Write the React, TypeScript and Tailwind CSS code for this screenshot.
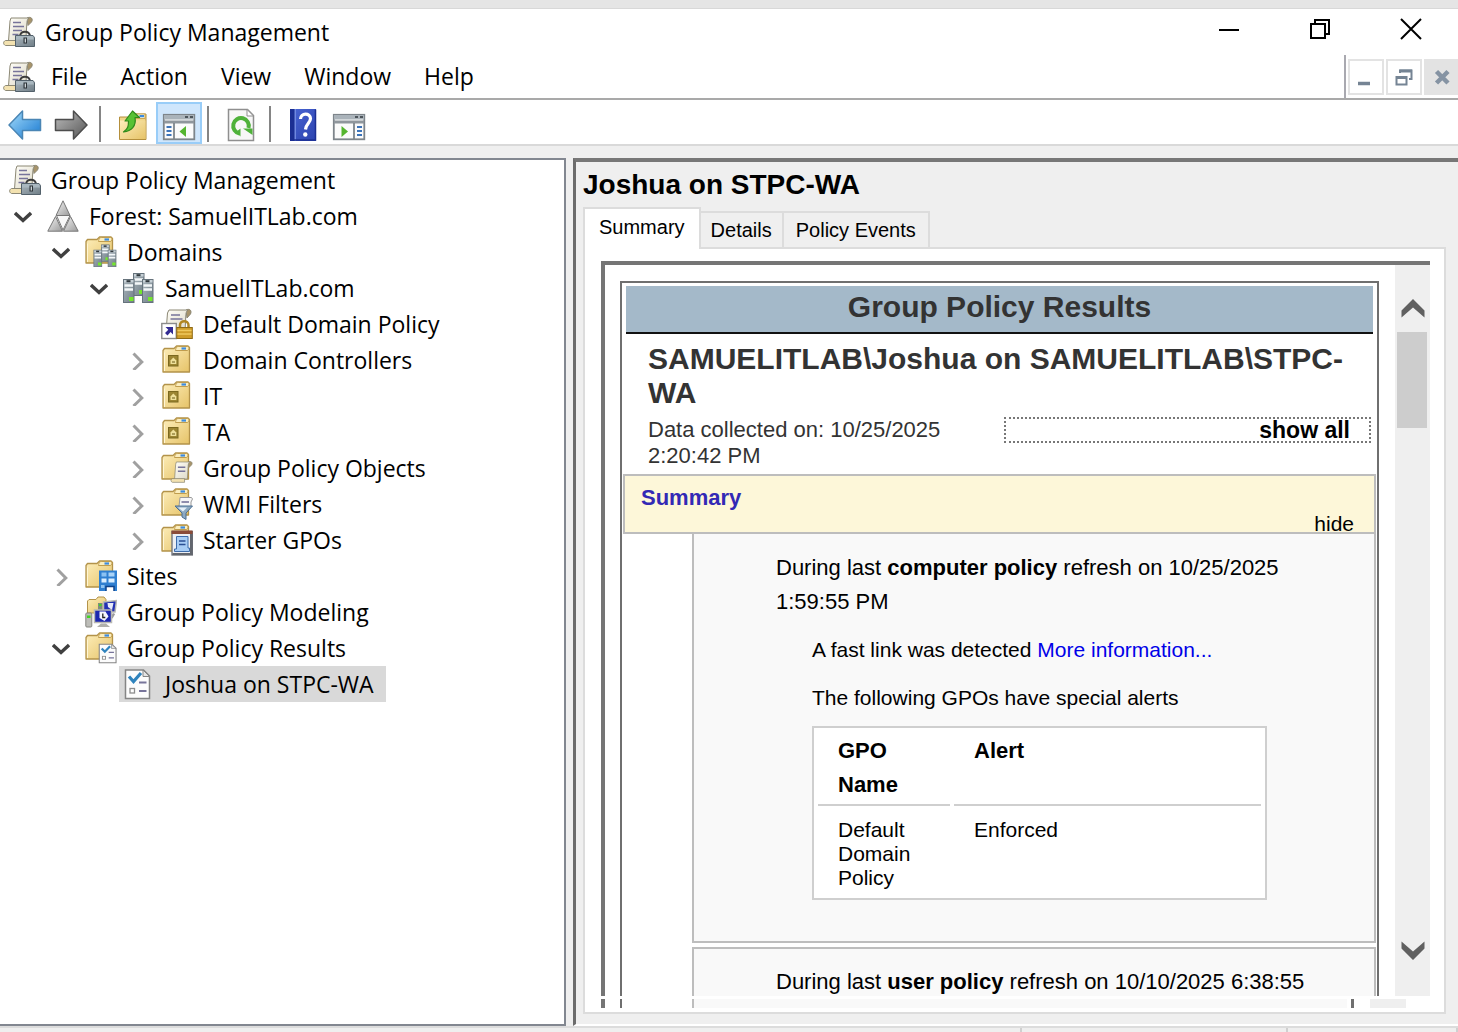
import React from "react";

type IconProps = { className?: string };

function IconGradients() {
  return (
    <svg className="absolute size-0" aria-hidden="true">
      <defs>
        <linearGradient id="folder" x1="0" y1="0" x2="1" y2="1">
          <stop offset="0" stopColor="#fdeebb" />
          <stop offset="1" stopColor="#e6c368" />
        </linearGradient>
        <linearGradient id="paper" x1="0" y1="0" x2="1" y2="1">
          <stop offset="0" stopColor="#fffef8" />
          <stop offset="1" stopColor="#dcd8c6" />
        </linearGradient>
        <linearGradient id="steel" x1="0" y1="0" x2="1" y2="1">
          <stop offset="0" stopColor="#aab6bd" />
          <stop offset="1" stopColor="#707e87" />
        </linearGradient>
        <linearGradient id="silver" x1="0" y1="0" x2="1" y2="1">
          <stop offset="0" stopColor="#f4f4f4" />
          <stop offset="1" stopColor="#9b9b9b" />
        </linearGradient>
        <linearGradient id="arrowBlue" x1="0" y1="0" x2="1" y2="1">
          <stop offset="0" stopColor="#a4dcfb" />
          <stop offset="1" stopColor="#1878d0" />
        </linearGradient>
        <linearGradient id="arrowGray" x1="0" y1="0" x2="1" y2="1">
          <stop offset="0" stopColor="#bdbdbd" />
          <stop offset="1" stopColor="#555555" />
        </linearGradient>
        <linearGradient id="book" x1="0" y1="0" x2="1" y2="1">
          <stop offset="0" stopColor="#4a66d4" />
          <stop offset="1" stopColor="#2b42ae" />
        </linearGradient>
      </defs>
    </svg>
  );
}

function FolderShape() {
  return (
    <g>
      <path
        d="M1 5.500 2.500 3.500H12L14.500 1H26l1.500 1.500V27H1Z"
        fill="url(#folder)"
        stroke="#b3934a"
        strokeWidth="1.300"
        strokeLinejoin="round"
      />
      <path d="M13.500 5.500C14 2 15 1.500 17 1.500h8.500c2 0 2 4-.5 4Z" fill="#fbeebf" stroke="#c09d4e" strokeWidth="1" />
      <rect x="19.500" y="2.400" width="4.500" height="2.200" fill="#3c8be0" />
      <path d="M2.500 26V7.500" stroke="#fff6d4" strokeWidth="1" />
    </g>
  );
}

function ScrollShape() {
  return (
    <g stroke="#8c8875" strokeWidth="1">
      <path d="M24 2c4-2 6.500 1 4.500 4L25 9.500Z" fill="#a8946a" />
      <path d="M8 2h18c-2 1.500-2 3.500-2.200 6l-1 17H5.500L7 5Z" fill="url(#paper)" />
      <path d="M2.500 24.500H19V29.500H2.500C0 28.500 0 25.500 2.500 24.500Z" fill="#f3e2b0" />
    </g>
  );
}

function PolicyIcon({ className }: IconProps) {
  return (
    <svg viewBox="0 0 32 32" className={className} aria-hidden="true">
      <ScrollShape />
      <path d="M10 6.500h8M10 10.500h11M10 14.500h9M9.500 18.500h6" stroke="#77749a" strokeWidth="1.600" />
      <path d="M17 20.500c0-6.500 10-6.500 10 0" fill="none" stroke="#3b3b3b" strokeWidth="2" />
      <path d="M12.500 19.500h17.500l1.500 2V30.500h-19Z" fill="url(#steel)" stroke="#53616b" />
      <path d="M13 20h17l1 3.500H13Z" fill="#a9b7bf" />
      <rect x="20.500" y="21.500" width="3.500" height="6" fill="#2c3338" />
      <rect x="21.700" y="22.500" width="1.200" height="4" fill="#dfe6ea" />
    </svg>
  );
}

function ForestIcon({ className }: IconProps) {
  return (
    <svg viewBox="0 0 32 32" className={className} aria-hidden="true">
      <g fill="url(#silver)" stroke="#777" strokeWidth="1" strokeLinejoin="round">
        <path d="M16 .8 23 15.500H9Z" />
        <path d="M8.500 16.500 15.500 31.200H.8Z" />
        <path d="M23.500 16.500 31.200 31.200H16.500Z" />
        <path d="M9.500 15.500h13.500L16 30Z" fill="#f8f8f8" />
      </g>
    </svg>
  );
}

function Server({ x, y, h }: { x: number; y: number; h: number }) {
  return (
    <g>
      <rect x={x + 0.5} y={y + 0.5} width="10.500" height={h} fill="url(#steel)" stroke="#66737c" />
      <rect x={x + 1} y={y + 1} width="9.500" height="2.500" fill="#c6d0d6" />
      <rect x={x + 3.5} y={y + 1.2} width="4" height="2" fill="#30383d" />
      <path d={`M${x + 1.5} ${y + 6.5}h8.500M${x + 1.5} ${y + 10.5}h8.500`} stroke="#f3f7f9" strokeWidth="2.400" />
      <rect x={x + 6} y={y + h - 5} width="4.500" height="4" fill="#74e62c" />
    </g>
  );
}

function DomainIcon({ className }: IconProps) {
  return (
    <svg viewBox="0 0 32 32" className={className} aria-hidden="true">
      <Server x={10} y={1} h={22} />
      <Server x={0} y={7} h={23} />
      <Server x={19} y={7} h={23} />
    </svg>
  );
}

function DomainsIcon({ className }: IconProps) {
  return (
    <svg viewBox="0 0 32 32" className={className} aria-hidden="true">
      <FolderShape />
      <g transform="translate(8.500 8.500) scale(.75)">
        <Server x={10} y={0} h={22} />
        <Server x={0} y={7} h={22} />
        <Server x={19} y={7} h={22} />
      </g>
    </svg>
  );
}

function LinkedPolicyIcon({ className }: IconProps) {
  return (
    <svg viewBox="0 0 32 32" className={className} aria-hidden="true">
      <path d="M25 2c4-2 6 1 4.500 4L26 10Z" fill="#a8946a" stroke="#8c8875" />
      <path d="M8 2h19c-2 1.500-2 3.500-2.200 6L24 24H5L6.500 5Z" fill="url(#paper)" stroke="#8c8875" />
      <path d="M10 7h9M9.500 11h12" stroke="#77749a" strokeWidth="1.600" />
      <rect x=".8" y="15.500" width="14.500" height="15" fill="#fff" stroke="#8b8b8b" strokeWidth="1.400" />
      <path d="M4.500 19H12v7.500l-2.400-2.400L6.500 27.500l-2.500-2.500 3.300-3.300Z" fill="#322b93" />
      <path d="M19 20v-3c0-5 8.500-5 8.500 0v3" fill="none" stroke="#b18622" strokeWidth="2.500" />
      <rect x="15.800" y="19.500" width="15.500" height="11" fill="#cf9d2a" stroke="#8f6b16" />
      <path d="M16.500 22.500h14M16.500 26h14" stroke="#efc95e" strokeWidth="1.300" />
    </svg>
  );
}

function OuIcon({ className }: IconProps) {
  return (
    <svg viewBox="0 0 32 32" className={className} aria-hidden="true">
      <g transform="translate(1 1)">
        <FolderShape />
      </g>
      <rect x="7.500" y="11.500" width="9.500" height="10.500" fill="#9c8532" stroke="#7b681f" />
      <path d="M9.500 20v-3.500L12.300 13.500l3 3V20Z" fill="#efe09a" />
      <path d="M11 18h3" stroke="#6b5a18" strokeWidth="1" />
    </svg>
  );
}

function ObjectsIcon({ className }: IconProps) {
  return (
    <svg viewBox="0 0 32 32" className={className} aria-hidden="true">
      <FolderShape />
      <g transform="translate(9.500 8.500) scale(.74)">
        <ScrollShape />
        <path d="M10 9h10M10 14.500h10" stroke="#77749a" strokeWidth="2" />
      </g>
    </svg>
  );
}

function FilterIcon({ className }: IconProps) {
  return (
    <svg viewBox="0 0 32 32" className={className} aria-hidden="true">
      <FolderShape />
      <path d="M19 9.500h11.500l1 1.500-1.500 3v4.500H18Z" fill="#f6f6f6" stroke="#9a9a9a" />
      <path d="M20.500 14h7.500" stroke="#77749a" strokeWidth="1.600" />
      <path d="M14 18h17.500L25 25v6.500l-4-2.500v-4Z" fill="#8eaac2" stroke="#4b6f92" />
      <path d="M17 19.500h9l-4 4Z" fill="#e6f0f8" />
    </svg>
  );
}

function StarterIcon({ className }: IconProps) {
  return (
    <svg viewBox="0 0 32 32" className={className} aria-hidden="true">
      <FolderShape />
      <rect x="11" y="7.500" width="20.500" height="23.500" fill="#eceef2" stroke="#6c6f76" strokeWidth="1.300" />
      <rect x="10.500" y="6.500" width="21" height="3.500" fill="#8a4b38" />
      <path d="M29 10h2.500v21h-20v-2H29Z" fill="#62666e" />
      <path d="M15.500 12.500h11.500v11.500h1.500v3.500H13.500V25h2Z" fill="#a8cdf5" stroke="#3d6cab" />
      <path d="M18 17h6.500M18 20.500h6.500" stroke="#2a4f94" strokeWidth="1.600" />
    </svg>
  );
}

function SitesIcon({ className }: IconProps) {
  return (
    <svg viewBox="0 0 32 32" className={className} aria-hidden="true">
      <FolderShape />
      <rect x="14" y="10.500" width="18" height="20.500" fill="#2f7fd0" />
      <g fill="#d9eeff">
        <rect x="16.500" y="12.500" width="5" height="4" fill="#8cc2f2" />
        <rect x="23.500" y="12.500" width="6" height="4" fill="#a9d3f7" />
        <rect x="16.500" y="18.500" width="5" height="4" />
        <rect x="23.500" y="18.500" width="6" height="4" />
        <rect x="16" y="25" width="3.500" height="3" fill="#8cc2f2" />
      </g>
      <path d="M21 31v-4.500h8V31" fill="#fff" stroke="#0d418a" strokeWidth="1.500" />
    </svg>
  );
}

function ModelingIcon({ className }: IconProps) {
  return (
    <svg viewBox="0 0 32 32" className={className} aria-hidden="true">
      <path d="M2.500 17V5L4 3.500h7L13 1h6l2 2.500V17Z" fill="url(#folder)" stroke="#b3934a" />
      <rect x="13" y="7" width="4.500" height="7" fill="#7d8b7f" />
      <rect x="14" y="8" width="2.500" height="2" fill="#42d424" />
      <path d="M18.500 6 31.500 4.500 30 16H18.500Z" fill="#2230b4" stroke="#b9b9b4" strokeWidth="1.500" />
      <path d="M22.500 7h6l-1.500 7-4-3Z" fill="#e6e9f8" />
      <path d="M29 17.500 26.500 22" stroke="#9a9a9a" strokeWidth="2.500" />
      <rect x="9.500" y="14" width="17" height="12.500" fill="#1c27b0" stroke="#b9b9b4" strokeWidth="1.500" />
      <path d="M14.500 15.500h6l3 5-4 4.500-5-3Z" fill="#f4f5fd" />
      <path d="M17.800 17.500v4h2.500" stroke="#222" strokeWidth="1.300" fill="none" />
      <path d="M16 27.500h5l4 3.500H12Z" fill="#b0b0ab" />
      <rect x=".8" y="17" width="6" height="14" rx="1" fill="#bdbdb8" stroke="#868680" />
      <rect x="2" y="19.500" width="3.500" height="2.500" fill="#42d424" />
    </svg>
  );
}

function ReportShape() {
  return (
    <g>
      <path d="M2.500 2h18l6 6V30.500h-24Z" fill="#fcfcfc" stroke="#858585" strokeWidth="1.500" />
      <path d="M20 2v6.500h6.500Z" fill="#e4e4e4" stroke="#858585" />
      <path d="m6 8.500 4.500 5L18 5" fill="none" stroke="#2f83bd" strokeWidth="3.200" />
      <path d="M16 14.500h7.500M16 23h7.500" stroke="#77749a" strokeWidth="1.800" />
      <rect x="7" y="20.500" width="4.500" height="4.500" fill="#fff" stroke="#8d8d8d" strokeWidth="1.300" />
    </g>
  );
}

function ReportIcon({ className }: IconProps) {
  return (
    <svg viewBox="0 0 32 32" className={className} aria-hidden="true">
      <ReportShape />
    </svg>
  );
}

function ResultsIcon({ className }: IconProps) {
  return (
    <svg viewBox="0 0 32 32" className={className} aria-hidden="true">
      <FolderShape />
      <g transform="translate(12.500 11) scale(.7 .65)">
        <ReportShape />
      </g>
    </svg>
  );
}

function Arrow({ flip }: { flip?: boolean }) {
  return (
    <svg viewBox="0 0 34 32" className="h-8 w-[34px]" aria-hidden="true">
      <path
        d={flip ? "M33 16 19.500 2v8.500H1.500v11h18V30Z" : "M1 16 14.500 2v8.500h18v11h-18V30Z"}
        fill={flip ? "url(#arrowGray)" : "url(#arrowBlue)"}
        stroke={flip ? "#4d4d4d" : "#4a86b5"}
        strokeWidth="1.500"
        strokeLinejoin="round"
      />
    </svg>
  );
}

function UpFolderIcon() {
  return (
    <svg viewBox="0 0 32 32" className="size-8" aria-hidden="true">
      <path d="M2.500 8h10l3-3h13.500V30.500H2.500Z" fill="#f0d58a" stroke="#b48f3c" />
      <path d="M18 5h10v4.500H18Z" fill="#fdf6d8" stroke="#c9a654" />
      <rect x="22.500" y="6" width="4.500" height="2.200" fill="#3c8be0" />
      <path d="M3 11.500h25.500V30H3Z" fill="url(#folder)" />
      <path
        d="M6.500 23C11 20 11.500 17 11.500 12H8L15.500 2 22.500 8.500H18C19.500 17 14.500 22 6.500 23Z"
        fill="#58c234"
        stroke="#2f8a1b"
        strokeWidth="1.200"
        strokeLinejoin="round"
      />
    </svg>
  );
}

function PaneIcon({ flip }: { flip?: boolean }) {
  return (
    <svg viewBox="0 0 34 28" className="mt-1 h-7 w-[34px]" aria-hidden="true">
      <rect x="1.800" y="1.800" width="30.500" height="24.500" fill="#fbfbfb" stroke="#7e858b" strokeWidth="1.800" />
      <rect x="2" y="2" width="30" height="4.500" fill="#aab3ba" />
      <path d="M23 4h3M28 4h3" stroke="#4e565c" strokeWidth="2" />
      <path d="M2 9h30" stroke="#8f969c" strokeWidth="3" />
      {flip ? (
        <g>
          <path d="M22 10v16" stroke="#7e858b" strokeWidth="1.800" />
          <path d="M25 14h5M25 18h5M25 22h5" stroke="#3b73b9" strokeWidth="2.200" />
          <path d="M9.500 13v11l6.500-5.500Z" fill="#55b52f" />
        </g>
      ) : (
        <g>
          <path d="M12 10v16" stroke="#7e858b" strokeWidth="1.800" />
          <path d="M4.500 14h5M4.500 18h5M4.500 22h5" stroke="#3b73b9" strokeWidth="2.200" />
          <path d="M24 13v11l-6.500-5.500Z" fill="#55b52f" />
        </g>
      )}
    </svg>
  );
}

function RefreshIcon() {
  return (
    <svg viewBox="0 0 28 34" className="h-[34px] w-7" aria-hidden="true">
      <path d="M1.500 1.500h19l6 6V32.500h-25Z" fill="#f7f7f7" stroke="#8f8f8f" strokeWidth="1.500" />
      <path d="M20 1.500v6.500h6.500Z" fill="#fff" stroke="#8f8f8f" />
      <path d="M12.500 25.500A7.800 7.800 0 1 1 21.500 20" fill="none" stroke="#4fb23a" strokeWidth="4" />
      <path d="M13.500 20.500V28.500L9 24ZM16 20.500h9.500V27Z" fill="#4fb23a" />
    </svg>
  );
}

function HelpBookIcon() {
  return (
    <svg viewBox="0 0 28 34" className="h-[34px] w-7" aria-hidden="true">
      <rect x="1" y="1" width="26" height="32" fill="url(#book)" />
      <rect x="1" y="1" width="5" height="32" fill="#1b2f93" />
      <rect x="5.500" y="1" width="1.500" height="32" fill="#6f88e0" />
      <path d="M1.500 32h25V1.500" fill="none" stroke="#1b2f93" strokeWidth="1.500" />
      <path
        d="M11.500 11C11.500 4.500 21.500 4.500 21.500 10.500c0 4.500-4.500 5-5 11"
        fill="none"
        stroke="#fff"
        strokeWidth="3.200"
      />
      <circle cx="16.300" cy="26.500" r="2.200" fill="#fff" />
    </svg>
  );
}

function Chevron({ open }: { open: boolean }) {
  return (
    <svg viewBox="0 0 18 20" className="h-5 w-[18px]" aria-hidden="true">
      {open ? (
        <path d="m1 7 8 7.500L17 7" fill="none" stroke="#404040" strokeWidth="3.400" />
      ) : (
        <path d="m5.500 3.500 8.300 8.500-8.300 8" fill="none" stroke="#a0a0a0" strokeWidth="3" />
      )}
    </svg>
  );
}

type Node = {
  label: string;
  indent: string;
  icon: (p: IconProps) => React.ReactElement;
  state?: "open" | "closed";
  selected?: boolean;
};

const L1 = "pl-[5px]";
const L2 = "pl-[43px]";
const L3 = "pl-[81px]";
const L4 = "pl-[119px]";

const tree: Node[] = [
  { label: "Forest: SamuelITLab.com", indent: L1, icon: ForestIcon, state: "open" },
  { label: "Domains", indent: L2, icon: DomainsIcon, state: "open" },
  { label: "SamuelITLab.com", indent: L3, icon: DomainIcon, state: "open" },
  { label: "Default Domain Policy", indent: L4, icon: LinkedPolicyIcon },
  { label: "Domain Controllers", indent: L4, icon: OuIcon, state: "closed" },
  { label: "IT", indent: L4, icon: OuIcon, state: "closed" },
  { label: "TA", indent: L4, icon: OuIcon, state: "closed" },
  { label: "Group Policy Objects", indent: L4, icon: ObjectsIcon, state: "closed" },
  { label: "WMI Filters", indent: L4, icon: FilterIcon, state: "closed" },
  { label: "Starter GPOs", indent: L4, icon: StarterIcon, state: "closed" },
  { label: "Sites", indent: L2, icon: SitesIcon, state: "closed" },
  { label: "Group Policy Modeling", indent: L2, icon: ModelingIcon },
  { label: "Group Policy Results", indent: L2, icon: ResultsIcon, state: "open" },
  { label: "Joshua on STPC-WA", indent: L3, icon: ReportIcon, selected: true },
];

function TreeRow({ node }: { node: Node }) {
  const Icon = node.icon;
  return (
    <li className={`flex h-9 items-center ${node.indent}`}>
      <span className="flex w-[38px] shrink-0 pl-[9px]">
        {node.state && (
          <button aria-label={`Toggle ${node.label}`}>
            <Chevron open={node.state === "open"} />
          </button>
        )}
      </span>
      <button
        className={`flex h-9 items-center gap-[10px] pr-3 pl-1 whitespace-nowrap ${
          node.selected ? "bg-[#d9d9d9]" : ""
        }`}
      >
        <Icon className="size-8 shrink-0" />
        <span className="pb-px">{node.label}</span>
      </button>
    </li>
  );
}

function ToolButton({ label, active, children }: { label: string; active?: boolean; children: React.ReactNode }) {
  return (
    <button
      aria-label={label}
      className={`flex h-[42px] w-[46px] items-center justify-center pt-1 ${
        active ? "border-2 border-[#99cdf8] bg-[#cfe6fc]" : ""
      }`}
    >
      {children}
    </button>
  );
}

function Separator() {
  return <span className="mr-[9px] mb-[2px] ml-[5px] h-9 w-[2px] bg-[#858585]" />;
}

function TitleBar() {
  return (
    <header className="flex h-[46px] shrink-0 items-center bg-white pl-[3px]">
      <PolicyIcon className="size-8" />
      <h1 className="flex-1 pl-[10px]">Group Policy Management</h1>
      <div className="flex h-full pr-[2px] pb-[6px]">
        <button aria-label="Minimize" className="flex w-[91px] items-center justify-center">
          <svg viewBox="0 0 22 22" className="size-[22px]" aria-hidden="true">
            <path d="M1 12h20" stroke="#000" strokeWidth="2" />
          </svg>
        </button>
        <button aria-label="Restore" className="flex w-[91px] items-center justify-center">
          <svg viewBox="0 0 22 22" className="size-[22px]" aria-hidden="true">
            <path d="M2 6h14v14H2ZM6 6V2h14v14h-4" fill="none" stroke="#000" strokeWidth="2" />
          </svg>
        </button>
        <button aria-label="Close" className="flex w-[91px] items-center justify-center">
          <svg viewBox="0 0 22 22" className="size-[22px]" aria-hidden="true">
            <path d="m1 1 20 20M21 1 1 21" stroke="#000" strokeWidth="2" />
          </svg>
        </button>
      </div>
    </header>
  );
}

function MenuBar() {
  return (
    <div className="flex h-[45px] shrink-0 items-stretch border-b-2 border-[#a9a9a9] bg-white">
      <PolicyIcon className="ml-[3px] size-8 self-center" />
      <nav className="flex flex-1 items-center gap-[33px] pb-[2px] pl-4">
        {["File", "Action", "View", "Window", "Help"].map((m) => (
          <button key={m}>{m}</button>
        ))}
      </nav>
      <div className="flex items-center gap-[2px] border-l-2 border-[#a9a9b0] pl-[2px]">
        <button aria-label="Minimize child window" className="size-9 border-2 border-[#e3e3e3]">
          <svg viewBox="0 0 32 32" aria-hidden="true">
            <path d="M8 22.500h12" stroke="#758494" strokeWidth="3.500" />
          </svg>
        </button>
        <button aria-label="Restore child window" className="size-9 border-2 border-[#e3e3e3]">
          <svg viewBox="0 0 32 32" aria-hidden="true">
            <path d="M12 12V9.500h11.500V18H21" fill="none" stroke="#758494" strokeWidth="2" />
            <path d="M11.500 10H24" stroke="#758494" strokeWidth="3" />
            <path d="M8.500 16h10v7.500h-10Z" fill="#fff" stroke="#758494" strokeWidth="2" />
            <path d="M8 16.500h11" stroke="#758494" strokeWidth="3" />
          </svg>
        </button>
        <button aria-label="Close child window" className="h-9 w-[34px] border-2 border-r-0 border-[#e3e3e3] bg-[#e3e3e3]">
          <svg viewBox="0 0 32 32" aria-hidden="true">
            <path d="m10.500 10.500 11.500 11.500M22 10.500 10.500 22" stroke="#8593a3" strokeWidth="4.500" />
          </svg>
        </button>
      </div>
    </div>
  );
}

function ToolBar() {
  return (
    <div className="flex h-[46px] shrink-0 items-end border-b-2 border-[#d9d9d9] bg-white pl-[2px]">
      <ToolButton label="Back">
        <Arrow />
      </ToolButton>
      <ToolButton label="Forward">
        <Arrow flip />
      </ToolButton>
      <Separator />
      <ToolButton label="Up one level">
        <UpFolderIcon />
      </ToolButton>
      <ToolButton label="Show or hide console tree" active>
        <PaneIcon />
      </ToolButton>
      <Separator />
      <ToolButton label="Refresh">
        <RefreshIcon />
      </ToolButton>
      <Separator />
      <ToolButton label="Help">
        <HelpBookIcon />
      </ToolButton>
      <ToolButton label="Show or hide action pane">
        <PaneIcon flip />
      </ToolButton>
    </div>
  );
}

function AlertsTable() {
  return (
    <table className="mt-[11px] w-[455px] border-separate border-spacing-x-[4px] border-spacing-y-0 border-2 border-[#cfcfcf] bg-white pb-2 text-left text-[21px] leading-6">
      <thead>
        <tr className="align-top text-[22px] leading-[34px]">
          <th className="w-[132px] border-b-2 border-[#cfcfcf] pt-[6px] pr-8 pb-[2px] pl-5">GPO Name</th>
          <th className="border-b-2 border-[#cfcfcf] pt-[6px] pl-5">Alert</th>
        </tr>
      </thead>
      <tbody>
        <tr className="align-top">
          <td className="pt-3 pl-5">Default Domain Policy</td>
          <td className="pt-3 pl-5">Enforced</td>
        </tr>
      </tbody>
    </table>
  );
}

function Report() {
  return (
    <article className="mt-4 mr-4 mb-0 ml-[15px] flex-1 border-2 border-[#6f6f6f] px-0 pt-[3px]">
      <h2 className="mx-1 flex h-12 items-center justify-center border-b-2 border-[#111] bg-[#a4b9c9] pb-1 text-[30px] font-bold text-[#333]">
        Group Policy Results
      </h2>
      <div className="pt-2 pr-[6px] pl-[26px] text-[#333]">
        <h3 className="text-[30px] leading-[34px] font-bold">SAMUELITLAB\Joshua on SAMUELITLAB\STPC-WA</h3>
        <div className="flex pt-[7px] pb-[5px] text-[22px] leading-[26px]">
          <p className="w-[356px]">Data collected on: 10/25/2025 2:20:42 PM</p>
          <button className="h-[26px] flex-1 border-2 border-dotted border-[#777] pr-[19px] text-right text-[23px] leading-[22px] font-bold text-black">
            show all
          </button>
        </div>
      </div>
      <div className="mx-px flex h-[60px] flex-col justify-between border-2 border-[#bdbdbd] bg-[#fdf7d9] pt-2 pr-5 pl-4 text-[22px]">
        <h3 className="leading-7 font-bold text-[#3329b5]">Summary</h3>
        <button className="self-end text-[21px] leading-4">hide</button>
      </div>
      <section className="mr-px ml-[70px] h-[409px] border-2 border-t-0 border-[#bdbdbd] bg-[#f9f9f9] pt-[17px] pr-10 pl-[82px]">
        <p className="text-[22px] leading-[34px]">
          <span className="whitespace-nowrap">
            During last <b>computer policy</b> refresh on 10/25/2025
          </span>{" "}
          <span className="whitespace-nowrap">1:59:55 PM</span>
        </p>
        <div className="pl-9 text-[21px] leading-[34px]">
          <p className="pt-[14px]">
            A fast link was detected{" "}
            <a href="#" className="text-[#0000e8]">
              More information...
            </a>
          </p>
          <p className="pt-[14px] leading-[34px]">The following GPOs have special alerts</p>
          <AlertsTable />
        </div>
      </section>
      <section className="mt-1 mr-px ml-[70px] border-2 border-[#bdbdbd] bg-[#f9f9f9] pt-4 pr-10 pb-8 pl-[82px]">
        <p className="text-[22px] leading-[34px]">
          During last <b>user policy</b> refresh on 10/10/2025 6:38:55
        </p>
      </section>
    </article>
  );
}

function ScrollBar() {
  return (
    <div className="flex w-[35px] shrink-0 flex-col items-center bg-[#efefef]">
      <button aria-label="Scroll up" className="flex h-[67px] items-end pb-[14px]">
        <svg viewBox="0 0 24 20" className="h-5 w-6" aria-hidden="true">
          <path d="M.5 12.500 12 1 23.500 12.500V19.500L12 9.500.5 19.500Z" fill="#606060" />
        </svg>
      </button>
      <div className="mr-px h-24 w-[30px] bg-[#cdcdcd]" />
      <button aria-label="Scroll down" className="mt-auto flex h-[67px] items-center pb-6">
        <svg viewBox="0 0 24 20" className="h-5 w-6" aria-hidden="true">
          <path d="M.5 7.500 12 19 23.500 7.500V.5L12 10.500.5.5Z" fill="#606060" />
        </svg>
      </button>
    </div>
  );
}

function ReportPane() {
  return (
    <main className="flex min-h-0 min-w-0 flex-col border-t-4 border-b-2 border-l-[3px] border-t-[#777] border-b-white border-l-[#6c6c6c] pr-3 pl-[7px] font-['Liberation_Sans',Arial,sans-serif]">
      <h2 className="shrink-0 pt-[7px] text-[28px] leading-8 font-bold">Joshua on STPC-WA</h2>
      <div role="tablist" className="mt-[6px] flex h-10 shrink-0 items-end text-[20px]">
        <button
          role="tab"
          aria-selected="true"
          className="relative z-10 -mb-[2px] h-[42px] border-2 border-b-0 border-[#dcdcdc] bg-white px-[14px] pb-1"
        >
          Summary
        </button>
        <button role="tab" aria-selected="false" className="h-9 border-t-2 border-r-2 border-[#dcdcdc] px-[10px]">
          Details
        </button>
        <button role="tab" aria-selected="false" className="h-9 border-t-2 border-r-2 border-[#dcdcdc] px-3">
          Policy Events
        </button>
      </div>
      <div className="mb-[10px] flex min-h-0 flex-1 flex-col border-2 border-[#dcdcdc] bg-white pt-3 pr-[14px] pb-1 pl-4">
        <div className="flex min-h-0 flex-1 overflow-hidden border-t-4 border-l-4 border-[#757575]">
          <div className="flex min-w-0 flex-1 flex-col overflow-hidden">
            <Report />
          </div>
          <ScrollBar />
        </div>
        <div className="mt-[3px] flex h-[9px] shrink-0">
          <div className="w-1 bg-[#757575]" />
          <div className="ml-[15px] w-[2px] bg-[#6f6f6f]" />
          <div className="ml-[70px] w-[2px] bg-[#bdbdbd]" />
          <div className="flex-1 bg-[#f9f9f9]" />
          <div className="ml-1 w-[3px] bg-[#6f6f6f]" />
          <div className="mr-6 ml-4 w-9 bg-[#efefef]" />
        </div>
      </div>
    </main>
  );
}

export default function App() {
  return (
    <div className="flex h-screen flex-col overflow-hidden bg-[#efefef] font-['Open_Sans','Noto_Sans',sans-serif] text-[23px] leading-8 text-black">
      <IconGradients />
      <div className="h-[9px] shrink-0 border-b border-[#d8d8d8] bg-[#e5e5e5]" />
      <TitleBar />
      <MenuBar />
      <ToolBar />
      <div className="mt-3 grid min-h-0 flex-1 grid-cols-[566px_1fr] gap-x-[7px]">
        <aside className="overflow-hidden border-2 border-l-0 border-[#828790] bg-white pt-[2px]">
          <div className="flex h-9 items-center gap-[10px] pl-[9px]">
            <PolicyIcon className="size-8" />
            Group Policy Management
          </div>
          <ul>
            {tree.map((n) => (
              <TreeRow key={n.label} node={n} />
            ))}
          </ul>
        </aside>
        <ReportPane />
      </div>
      <footer className="flex h-[6px] shrink-0 justify-end border-t-2 border-[#dcdcdc]">
        <span className="w-[266px] border-l-2 border-[#d0d0d0]" />
        <span className="w-[172px] border-x-2 border-[#d0d0d0]" />
      </footer>
    </div>
  );
}
